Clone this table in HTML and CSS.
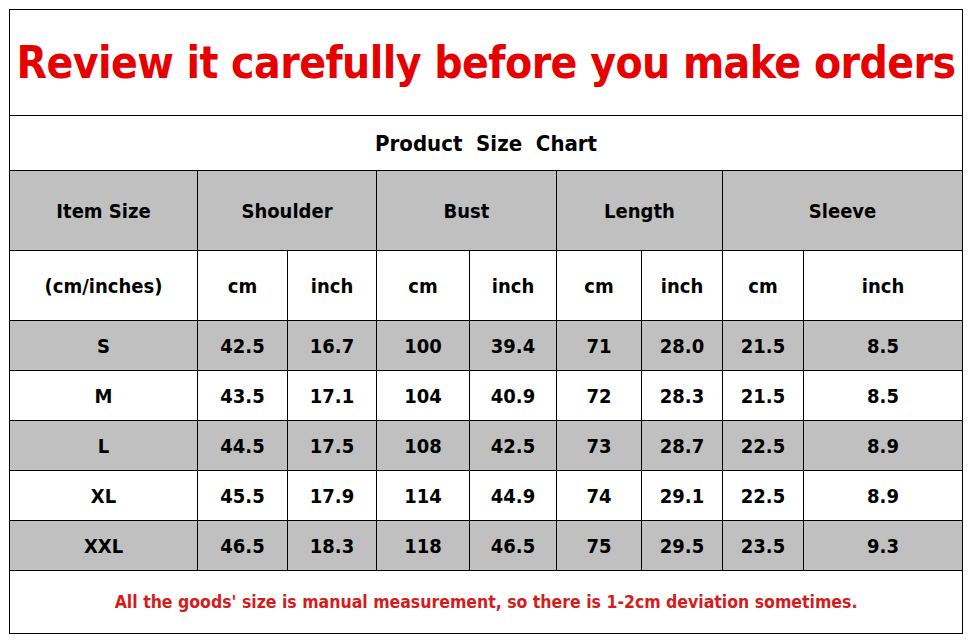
FILE: index.html
```html
<!DOCTYPE html>
<html>
<head>
<meta charset="utf-8">
<link rel="stylesheet" href="styles.css">
</head>
<body>
<table class="chart">
  <colgroup>
    <col class="c-size"><col class="c-sh-cm"><col class="c-sh-in"><col class="c-bu-cm"><col class="c-bu-in"><col class="c-le-cm"><col class="c-le-in"><col class="c-sl-cm"><col class="c-sl-in">
  </colgroup>
  <tr class="r-title"><td colspan="9" class="title">Review it carefully before you make orders</td></tr>
  <tr class="r-sub"><td colspan="9" class="sub">Product&nbsp; Size&nbsp; Chart</td></tr>
  <tr class="r-head grey"><td>Item Size</td><td colspan="2">Shoulder</td><td colspan="2">Bust</td><td colspan="2">Length</td><td colspan="2">Sleeve</td></tr>
  <tr class="r-units"><td>(cm/inches)</td><td>cm</td><td>inch</td><td>cm</td><td>inch</td><td>cm</td><td>inch</td><td>cm</td><td>inch</td></tr>
  <tr class="r-data grey"><td>S</td><td>42.5</td><td>16.7</td><td>100</td><td>39.4</td><td>71</td><td>28.0</td><td>21.5</td><td>8.5</td></tr>
  <tr class="r-data"><td>M</td><td>43.5</td><td>17.1</td><td>104</td><td>40.9</td><td>72</td><td>28.3</td><td>21.5</td><td>8.5</td></tr>
  <tr class="r-data grey"><td>L</td><td>44.5</td><td>17.5</td><td>108</td><td>42.5</td><td>73</td><td>28.7</td><td>22.5</td><td>8.9</td></tr>
  <tr class="r-data"><td>XL</td><td>45.5</td><td>17.9</td><td>114</td><td>44.9</td><td>74</td><td>29.1</td><td>22.5</td><td>8.9</td></tr>
  <tr class="r-data grey"><td>XXL</td><td>46.5</td><td>18.3</td><td>118</td><td>46.5</td><td>75</td><td>29.5</td><td>23.5</td><td>9.3</td></tr>
  <tr class="r-foot"><td colspan="9" class="note">All the goods' size is manual measurement, so there is 1-2cm deviation sometimes.</td></tr>
</table>
</body>
</html>
```
FILE: styles.css
```css
html, body {
  margin: 0;
  padding: 0;
  background: #fff;
}
body {
  padding: 9px 0 0 9px;
}
.chart {
  border-collapse: collapse;
  table-layout: fixed;
  width: 953px;
  font-family: "DejaVu Sans Condensed", "DejaVu Sans", Verdana, sans-serif;
  font-stretch: condensed;
  font-weight: bold;
  font-size: 20px;
  color: #000;
}
.chart td {
  border: 1px solid #000;
  text-align: center;
  vertical-align: middle;
  padding: 0;
  white-space: nowrap;
}
.c-size { width: 188px; }
.c-sh-cm { width: 90px; }
.c-sh-in { width: 89px; }
.c-bu-cm { width: 93px; }
.c-bu-in { width: 87px; }
.c-le-cm { width: 85px; }
.c-le-in { width: 81px; }
.c-sl-cm { width: 81px; }
.c-sl-in { width: 159px; }
.grey td { background: #c0c0c0; }
.r-title td { height: 105px; }
.r-sub td { height: 54px; }
.r-head td { height: 79px; }
.r-units td { height: 69px; }
.r-data td { height: 49px; }
.r-foot td { height: 62px; }
.title {
  color: #e60000;
  font-size: 44px;
  letter-spacing: -0.55px;
  padding-top: 4px;
}
.sub {
  font-size: 22px;
}
.note {
  color: #d41c1c;
  font-size: 17.5px;
}
```
